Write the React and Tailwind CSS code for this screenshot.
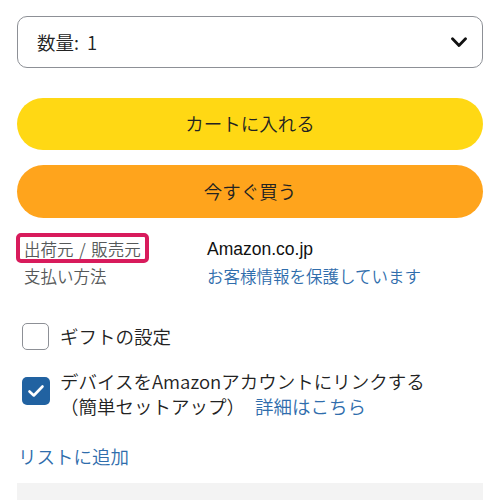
export default function App() {
  return (
    <div className="w-[500px] h-[500px] overflow-hidden bg-white px-[17px] pt-[16px] font-['Noto_Sans_CJK_JP','Noto_Sans',sans-serif] font-[350] text-[#0f1111]">
      <div className="h-[52px] border border-[#8d9096] rounded-[10px] flex items-center justify-between pl-[19px] pr-[15px]">
        <span className="text-[18.5px] leading-none text-[#222]">
          数量:<span className="ml-[8px]">1</span>
        </span>
        <svg width="16" height="11" viewBox="0 0 16 11" fill="none">
          <path d="M1.5 1.8 L8 8.5 L14.5 1.8" stroke="#111" strokeWidth="2.8" strokeLinecap="round" strokeLinejoin="round" />
        </svg>
      </div>
      <div className="mt-[30px] h-[52px] rounded-full bg-[#FFD814] flex items-center justify-center text-[18.5px] text-[#222]">
        カートに入れる
      </div>
      <div className="mt-[15px] h-[53px] rounded-full bg-[#FFA41C] flex items-center justify-center text-[18.5px] text-[#222]">
        今すぐ買う
      </div>
      <div className="mt-[18px] grid grid-cols-[190px_1fr] text-[16.5px] leading-[27px]">
        <div className="pl-[7px] text-[#565959]">
          <span className="relative inline-block">
            出荷元 <span className="mx-[2px]">/</span> 販売元
            <span className="absolute -left-[8px] -right-[8px] -top-[3px] -bottom-[0px] border-[4px] border-[#d81b5c] rounded-[5px]"></span>
          </span>
        </div>
        <div className="text-[#111] font-['Liberation_Sans',sans-serif] font-normal text-[17.5px]">Amazon.co.jp</div>
        <div className="pl-[7px] text-[#565959]">支払い方法</div>
        <div className="text-[#2f6dac]">お客様情報を保護しています</div>
      </div>
      <div className="mt-[33px] flex items-center pl-[5px] h-[27px]">
        <span className="w-[27px] h-[27px] rounded-[5px] border-[1.5px] border-[#8d9096] bg-white shrink-0"></span>
        <span className="ml-[11px] text-[18.5px] leading-[27px] text-[#222]">ギフトの設定</span>
      </div>
      <div className="mt-[19px] flex items-start pl-[5px]">
        <span className="mt-[7.5px] w-[28px] h-[28px] rounded-[5px] bg-[#2162a1] shrink-0 flex items-center justify-center">
          <svg width="18" height="14" viewBox="0 0 18 14" fill="none">
            <path d="M2.5 7.5 L6.8 11.5 L15.5 2.5" stroke="#fff" strokeWidth="2.6" strokeLinecap="round" strokeLinejoin="round" />
          </svg>
        </span>
        <div className="ml-[10px] text-[18.5px] leading-[25px] text-[#222]">
          <div>デバイスをAmazonアカウントにリンクする</div>
          <div>
            （簡単セットアップ）<span className="ml-[10px] text-[#2f6dac]">詳細はこちら</span>
          </div>
        </div>
      </div>
      <div className="mt-[24px] text-[18.5px] leading-[27px] text-[#2f6dac] pl-[1px]">リストに追加</div>
      <div className="mt-[12.5px] h-[40px] bg-[#f3f3f3]"></div>
    </div>
  );
}
